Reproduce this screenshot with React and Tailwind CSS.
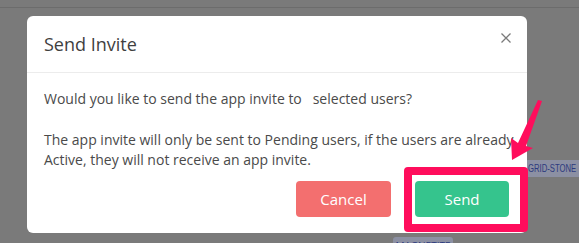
import React from "react";

const SendInviteModal = () => {
  return (
    <div className="relative w-[500px] rounded-md bg-white">
      {/* Header */}
      <div className="flex h-[57px] items-center justify-between border-b border-[#ececec] pl-[17px] pr-[16px]">
        <h2 className="text-[18px] text-[#3f3f3f]">Send Invite</h2>
        <button className="mt-[17px] self-start text-[#7a7a7a]">
          <svg width="10" height="10" viewBox="0 0 10 10" fill="none" stroke="currentColor" strokeWidth="1.3">
            <path d="M0.5 0.5L9.5 9.5M9.5 0.5L0.5 9.5" />
          </svg>
        </button>
      </div>

      {/* Body */}
      <div className="px-[17px] pt-[16px] text-[14px] leading-[20px] text-[#4a4a4a]">
        <p className="whitespace-pre">Would you like to send the app invite to   selected users?</p>
        <p className="mt-[21px] whitespace-nowrap">
          The app invite will only be sent to Pending users, if the users are already
          <br />
          Active, they will not receive an app invite.
        </p>
      </div>

      {/* Footer */}
      <div className="flex justify-end gap-[24px] pb-[16px] pr-[18px] pt-[11px]">
        <button className="h-[36px] w-[95px] rounded-[4px] bg-[#f36f6f] text-[15px] text-white">
          Cancel
        </button>
        <button className="h-[36px] w-[94px] rounded-[4px] bg-[#35c48d] text-[15px] text-white">
          Send
        </button>
      </div>

      {/* highlight box around Send */}
      <div className="absolute bottom-[1px] right-[-1px] h-[65px] w-[124px] rounded-[4px] border-[8px] border-[#ff0d5c]" />
    </div>
  );
};

export default function App() {
  return (
    <div
      className="relative h-[243px] w-[579px] overflow-hidden bg-[#7a7a7a] pl-[27px] pt-[16px]"
      style={{ fontFamily: '"Open Sans", "Liberation Sans", sans-serif' }}
    >
      {/* page behind the overlay */}
      <div className="absolute left-0 right-0 top-[7px] h-px bg-[#6c6c6c]" />
      <div className="absolute left-[525px] top-[160px] flex h-[17px] w-[56px] items-center rounded-[3px] bg-[#8c90a3] pl-[3px] text-[11px] text-[#2c3a7e] whitespace-nowrap" style={{ fontFamily: '"Liberation Sans", sans-serif' }}>
        <span className="origin-left scale-x-[0.7]">GRID-STONE</span>
      </div>
      <div className="absolute left-[393px] top-[237px] flex h-[17px] w-[60px] items-start justify-center rounded-[3px] bg-[#8c90a3] pt-[2px] text-[10px] text-[#2c3a7e]">
        MAGNETITE
      </div>

      <SendInviteModal />

      {/* arrow */}
      <svg className="absolute left-0 top-0" width="579" height="243" viewBox="0 0 579 243">
        <polygon
          points="538,100 542,101 526,146 533,148 512,160 511,138 518,143"
          fill="#ff0d5c"
        />
      </svg>
    </div>
  );
}
